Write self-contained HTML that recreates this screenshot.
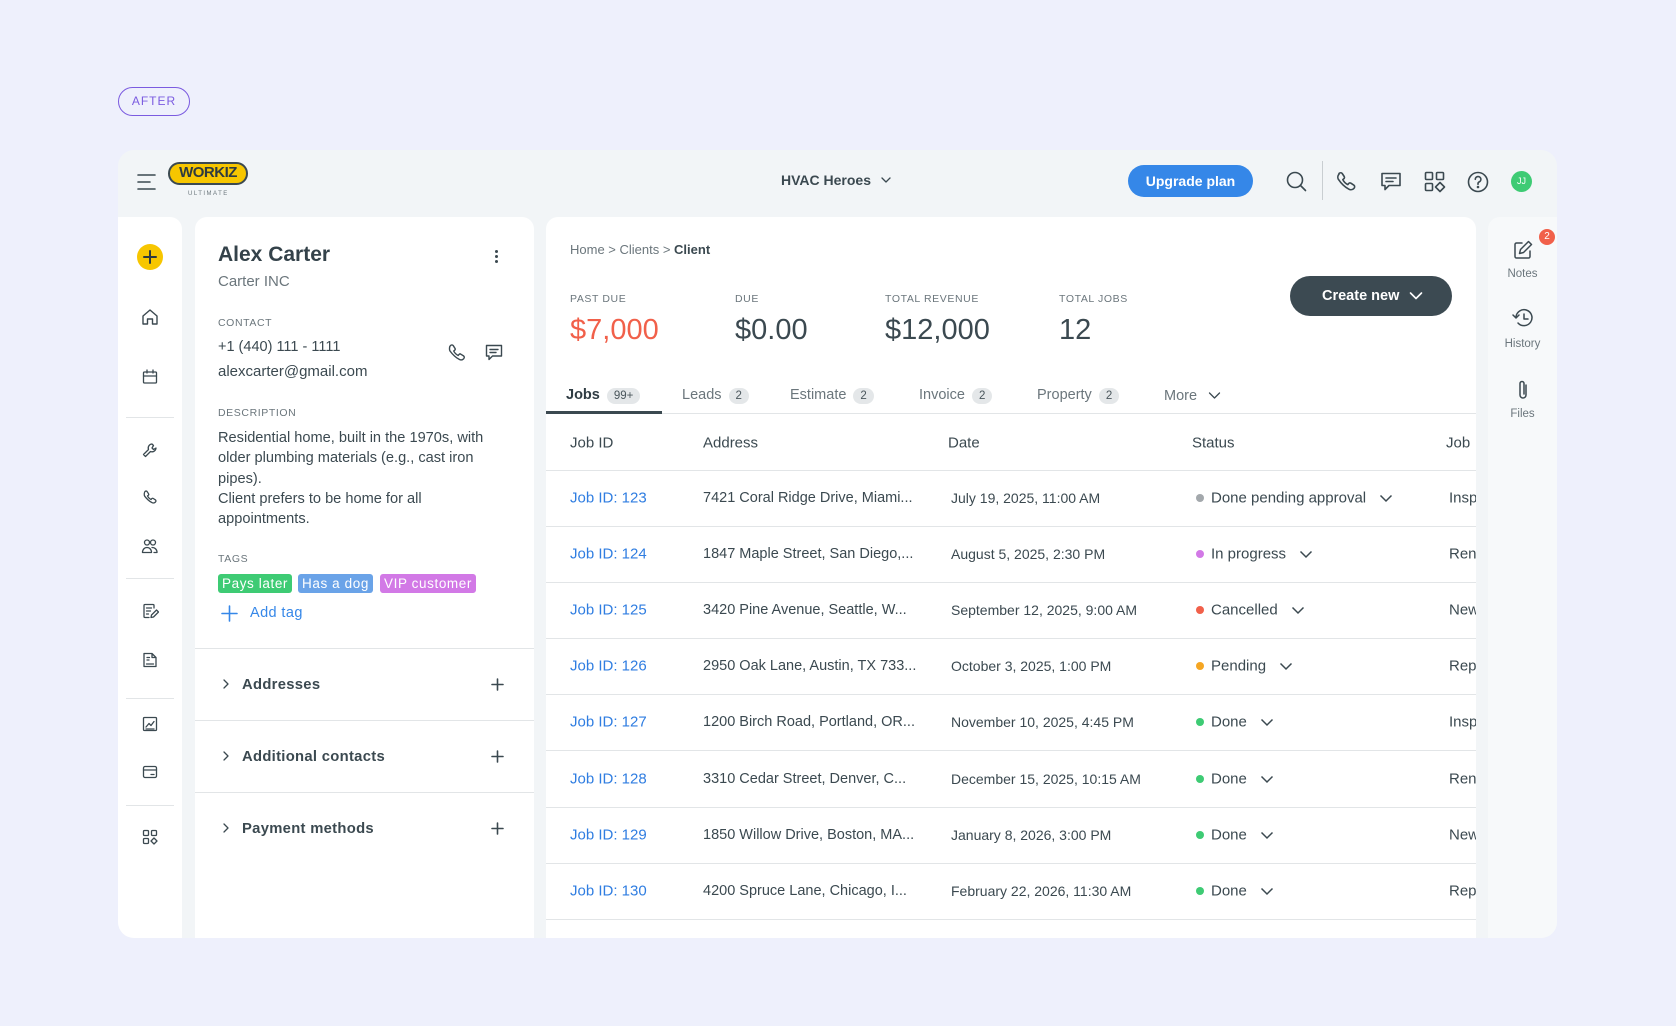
<!DOCTYPE html>
<html><head><meta charset="utf-8"><style>
*{box-sizing:border-box;margin:0;padding:0}
body{width:1676px;height:1026px;background:#eef0fc;font-family:"Liberation Sans",sans-serif;color:#3b4950;position:relative;overflow:hidden}
.a{position:absolute}
.ic{position:absolute;fill:none;stroke:#3b4950;stroke-width:1.6;stroke-linecap:round;stroke-linejoin:round}
.lbl{font-size:10.5px;letter-spacing:.6px;color:#6b767c}
.hr{position:absolute;height:1px;background:#e2e5e7}
.cell{position:absolute;font-size:15px;white-space:nowrap;transform:translateY(-50%)}
.tab{position:absolute;top:387px;font-size:14.5px;color:#6b767c}
.bd{display:inline-block;background:#e4e7e9;border-radius:10px;font-size:11.5px;padding:2px 7px;margin-left:7px;color:#4a565c}
.tag{position:absolute;top:574px;height:19px;color:#fff;font-size:13.5px;line-height:19px;padding:0 4px;border-radius:3px;letter-spacing:.6px}
</style></head><body>
<div class="a" style="left:118px;top:87px;width:72px;height:29px;border:1.3px solid #7b5be0;border-radius:15px;color:#7b5be0;font-size:12px;letter-spacing:1px;text-align:center;line-height:27px">AFTER</div>

<div class="a" style="left:118px;top:150px;width:1439px;height:788px;background:#f2f5f7;border-radius:16px"></div>

<!-- topbar -->
<svg class="ic" style="left:136px;top:172px" width="22" height="20"><path d="M2 3h17M2 10h12M2 17h17"/></svg>
<div class="a" style="left:168px;top:162px;width:80px;height:23px;background:#f7c600;border:2.5px solid #3b4950;border-radius:12px;font-weight:bold;font-size:15px;text-align:center;line-height:18px;color:#2d3a40;letter-spacing:-.5px">WORKIZ</div>
<div class="a" style="left:188px;top:191px;font-size:6px;letter-spacing:1.5px;color:#6b767c">ULTIMATE</div>
<div class="a" style="left:781px;top:172px;font-size:14px;font-weight:bold;color:#3b4950">HVAC Heroes</div>
<svg class="ic" style="left:880px;top:175px" width="12" height="10" ><path d="M2 3l4 4 4-4" stroke-width="1.3"/></svg>
<div class="a" style="left:1128px;top:165px;width:125px;height:32px;background:#3587e8;border-radius:16px;color:#fff;font-weight:bold;font-size:14px;text-align:center;line-height:32px">Upgrade plan</div>
<svg class="ic" style="left:1285px;top:170px" width="24" height="24"><circle cx="10" cy="10" r="7.5"/><path d="M15.5 15.5l5 5"/></svg>
<div class="a" style="left:1322px;top:161px;width:1px;height:39px;background:#c9ced1"></div>
<svg class="ic" style="left:1335px;top:170px" width="24" height="24"><path d="M4 3.5c1-1 2.5-1 3.2 0l2 3c.5.8.3 1.8-.4 2.3l-1 .8c1 2.2 2.8 4 5 5l.8-1c.5-.7 1.5-.9 2.3-.4l3 2c1 .7 1 2.2 0 3.2-1.3 1.3-3.4 1.7-5 .8C9.700 17 6 13.3 3.300 9.200c-.9-1.600-.5-3.700.7-5z"/></svg>
<svg class="ic" style="left:1379px;top:170px" width="24" height="24"><path d="M3 3.5h18v12H10l-4 4v-4H3z"/><path d="M7 8h10M7 11.5h7"/></svg>
<svg class="ic" style="left:1423px;top:170px" width="24" height="24"><rect x="2.5" y="2.5" width="7" height="7" rx="1"/><rect x="13.5" y="2.5" width="7" height="7" rx="1"/><rect x="2.5" y="13.5" width="7" height="7" rx="1"/><path d="M17 12.5l4.5 4.5-4.5 4.5-4.5-4.5z"/></svg>
<svg class="ic" style="left:1466px;top:170px" width="24" height="24"><circle cx="12" cy="12" r="9.5"/><path d="M9.3 9.300a2.800 2.800 0 1 1 3.900 2.600c-.8.400-1.200 1-1.200 1.800v.6"/><circle cx="12" cy="17" r=".5" fill="#3b4950"/></svg>
<div class="a" style="left:1511px;top:171px;width:21px;height:21px;border-radius:50%;background:#3ecb74;color:#fff;font-size:9px;text-align:center;line-height:21px">JJ</div>

<!-- left nav -->
<div class="a" style="left:118px;top:217px;width:64px;height:721px;background:#fff;border-radius:0 12px 0 16px"></div>
<div class="a" style="left:137px;top:244px;width:26px;height:26px;border-radius:50%;background:#f7c600"></div>
<svg class="ic" style="left:137px;top:244px;stroke:#2d3a40;stroke-width:2" width="26" height="26"><path d="M13 7v12M7 13h12"/></svg>
<svg class="ic" style="left:141px;top:308px;stroke-width:1.4" width="18" height="18"><path d="M2 8l7-6 7 6v8h-4.500v-5h-5v5H2z"/></svg>
<svg class="ic" style="left:142px;top:369px;stroke-width:1.3" width="16" height="16"><rect x="1.5" y="3" width="13" height="11" rx="1"/><path d="M1.5 7h13M5 1v3M11 1v3"/></svg>
<div class="hr" style="left:126px;top:417px;width:48px"></div>
<svg class="ic" style="left:142px;top:442px;stroke-width:1.3" width="16" height="16"><path d="M10 2a4 4 0 0 0-3.500 5.500L1.500 12.500l2 2 5-5A4 4 0 0 0 14 6l-2.500 1.500-1.500-1.500 1.500-2.500z"/></svg>
<svg class="ic" style="left:142px;top:490px;stroke-width:1.3" width="16" height="16"><path d="M3 1.500c.8-.7 1.700-.5 2.200.2l1.300 2c.4.6.2 1.300-.3 1.700l-.7.5c.7 1.500 2 2.900 3.600 3.600l.5-.7c.4-.5 1.100-.7 1.700-.3l2 1.300c.7.5.9 1.400.2 2.200-1 1-2.500 1.200-3.700.5C6.800 11 4.900 9.100 2.700 6.200 2 5 2.100 2.500 3 1.500z"/></svg>
<svg class="ic" style="left:141px;top:538px;stroke-width:1.3" width="18" height="16"><circle cx="6" cy="4.500" r="2.500"/><circle cx="12" cy="4.500" r="2.500"/><path d="M1.500 14.500c0-3 2-5 4.500-5s4.500 2 4.500 5zM11 9.500c3 0 5 2 5 5h-3"/></svg>
<div class="hr" style="left:126px;top:578px;width:48px"></div>
<svg class="ic" style="left:142px;top:603px;stroke-width:1.3" width="17" height="16"><path d="M12 5V2.500c0-.6-.4-1-1-1H3c-.6 0-1 .4-1 1v11c0 .6.4 1 1 1h4M4.500 5h5M4.500 8h4M4.500 11h2M9 14.500l.5-2.500 5-5 2 2-5 5z"/></svg>
<svg class="ic" style="left:142px;top:652px;stroke-width:1.3" width="16" height="16"><path d="M2 1.500h8l4 4v9H2zM10 1.500v4h4M4.500 12h7M5 5.500h2.500M5 8h2"/></svg>
<div class="hr" style="left:126px;top:698px;width:48px"></div>
<svg class="ic" style="left:142px;top:716px;stroke-width:1.3" width="16" height="16"><rect x="1.500" y="1.500" width="13" height="13" rx="1"/><path d="M4 11l3-3.500 2 2 3-4M4 13h8"/></svg>
<svg class="ic" style="left:142px;top:765px;stroke-width:1.3" width="16" height="14"><rect x="1.500" y="1.500" width="13" height="11" rx="1.500"/><path d="M1.500 5h13M9 9.500h3"/></svg>
<div class="hr" style="left:126px;top:805px;width:48px"></div>
<svg class="ic" style="left:142px;top:829px;stroke-width:1.3" width="16" height="16"><rect x="1.500" y="1.500" width="5" height="5" rx="1"/><rect x="9.500" y="1.500" width="5" height="5" rx="1"/><rect x="1.500" y="9.500" width="5" height="5" rx="1"/><path d="M12 9l3 3-3 3-3-3z"/></svg>

<!-- client panel -->
<div class="a" style="left:195px;top:217px;width:339px;height:721px;background:#fff;border-radius:12px 12px 0 0"></div>
<div class="a" style="left:218px;top:243px;font-size:21px;font-weight:bold;color:#34424a">Alex Carter</div>
<div class="a" style="left:495px;top:250px;width:3px;height:3px;border-radius:50%;background:#3b4950;box-shadow:0 5px 0 #3b4950,0 10px 0 #3b4950"></div>
<div class="a" style="left:218px;top:273px;font-size:15px;color:#6b767c">Carter INC</div>
<div class="a lbl" style="left:218px;top:317px">CONTACT</div>
<div class="a" style="left:218px;top:339px;font-size:14.5px">+1 (440) 111 - 1111</div>
<div class="a" style="left:218px;top:363px;font-size:15px">alexcarter@gmail.com</div>
<svg class="ic" style="left:447px;top:343px;stroke-width:1.4" width="20" height="20"><path d="M3.500 2.500c1-.9 2.200-.7 2.800.2l1.600 2.500c.5.700.3 1.600-.3 2.100l-.9.700c.9 1.900 2.500 3.500 4.500 4.500l.7-.9c.5-.7 1.400-.8 2.100-.3l2.500 1.600c.9.600 1.100 1.800.2 2.800-1.200 1.200-3 1.500-4.400.7C8.600 14.500 5.500 11.400 3 8 2.200 6.600 2.300 3.700 3.500 2.500z"/></svg>
<svg class="ic" style="left:484px;top:343px;stroke-width:1.4" width="20" height="20"><path d="M2.500 2.500h15v10.500H8.500l-3.500 3.500V13H2.500z"/><path d="M6 6.500h8M6 9.500h6"/></svg>
<div class="a lbl" style="left:218px;top:407px">DESCRIPTION</div>
<div class="a" style="left:218px;top:428px;width:285px;font-size:14.6px;line-height:20.3px">Residential home, built in the 1970s, with older plumbing materials (e.g., cast iron pipes).<br>Client prefers to be home for all appointments.</div>
<div class="a lbl" style="left:218px;top:553px">TAGS</div>
<div class="tag" style="left:218px;background:#3ecb74">Pays later</div>
<div class="tag" style="left:298px;background:#6aa3e8">Has a dog</div>
<div class="tag" style="left:380px;background:#d279e6">VIP customer</div>
<svg class="ic" style="left:221px;top:605px;stroke:#3587e8;stroke-width:1.6" width="17" height="17"><path d="M8.500 1v15M1 8.500h15"/></svg>
<div class="a" style="left:250px;top:605px;font-size:14.5px;color:#3587e8;letter-spacing:.4px">Add tag</div>
<div class="hr" style="left:195px;top:648px;width:339px"></div>
<div class="hr" style="left:195px;top:720px;width:339px"></div>
<div class="hr" style="left:195px;top:792px;width:339px"></div>
<svg class="ic" style="left:221px;top:678px;stroke-width:1.3" width="10" height="12"><path d="M3 2l4 4-4 4"/></svg>
<svg class="ic" style="left:221px;top:750px;stroke-width:1.3" width="10" height="12"><path d="M3 2l4 4-4 4"/></svg>
<svg class="ic" style="left:221px;top:822px;stroke-width:1.3" width="10" height="12"><path d="M3 2l4 4-4 4"/></svg>
<div class="a" style="left:242px;top:677px;font-size:14.8px;font-weight:bold;letter-spacing:.3px">Addresses</div>
<div class="a" style="left:242px;top:749px;font-size:14.8px;font-weight:bold;letter-spacing:.3px">Additional contacts</div>
<div class="a" style="left:242px;top:821px;font-size:14.8px;font-weight:bold;letter-spacing:.3px">Payment methods</div>
<svg class="ic" style="left:491px;top:678px" width="13" height="13"><path d="M6.500 1v11M1 6.500h11"/></svg>
<svg class="ic" style="left:491px;top:750px" width="13" height="13"><path d="M6.500 1v11M1 6.500h11"/></svg>
<svg class="ic" style="left:491px;top:822px" width="13" height="13"><path d="M6.500 1v11M1 6.500h11"/></svg>

<!-- main panel -->
<div class="a" style="left:546px;top:217px;width:930px;height:721px;background:#fff;border-radius:12px 12px 0 0;overflow:hidden"></div>
<div class="a" style="left:570px;top:242px;font-size:13px;color:#6b767c">Home &gt; Clients &gt; <span style="color:#3b4950;font-weight:bold">Client</span></div>
<div class="a lbl" style="left:570px;top:293px">PAST DUE</div>
<div class="a lbl" style="left:735px;top:293px">DUE</div>
<div class="a lbl" style="left:885px;top:293px">TOTAL REVENUE</div>
<div class="a lbl" style="left:1059px;top:293px">TOTAL JOBS</div>
<div class="a" style="left:570px;top:314px;font-size:29px;color:#f1604a">$7,000</div>
<div class="a" style="left:735px;top:314px;font-size:29px">$0.00</div>
<div class="a" style="left:885px;top:314px;font-size:29px">$12,000</div>
<div class="a" style="left:1059px;top:314px;font-size:29px">12</div>
<div class="a" style="left:1290px;top:276px;width:162px;height:40px;background:#3c4a52;border-radius:20px;color:#fff;font-weight:bold;font-size:14.5px;line-height:40px;padding-left:32px">Create new</div>
<svg class="ic" style="left:1409px;top:291px;stroke:#fff;stroke-width:1.6" width="14" height="10"><path d="M1.500 2l5.500 5.500 5.500-5.500"/></svg>

<div class="tab" style="left:566px;color:#2f3c43;font-weight:bold">Jobs<span class="bd" style="font-weight:normal">99+</span></div>
<div class="tab" style="left:682px">Leads<span class="bd">2</span></div>
<div class="tab" style="left:790px">Estimate<span class="bd">2</span></div>
<div class="tab" style="left:919px">Invoice<span class="bd">2</span></div>
<div class="tab" style="left:1037px">Property<span class="bd">2</span></div>
<div class="tab" style="left:1164px;top:388px">More</div>
<svg class="ic" style="left:1208px;top:391px;stroke-width:1.3" width="13" height="9"><path d="M1.500 2l5 5 5-5"/></svg>
<div class="hr" style="left:546px;top:413px;width:930px"></div>
<div class="a" style="left:546px;top:411px;width:116px;height:3px;background:#3b4950"></div>

<div class="cell" style="left:570px;top:443px">Job ID</div>
<div class="cell" style="left:703px;top:443px">Address</div>
<div class="cell" style="left:948px;top:443px">Date</div>
<div class="cell" style="left:1192px;top:443px">Status</div>
<div class="cell" style="left:1446px;top:443px">Job</div>
<div class="hr" style="left:546px;top:470px;width:930px"></div>

<div id="rows"></div>
<div class="a" style="left:1476px;top:217px;width:12px;height:721px;background:#f2f5f7"></div>

<!-- right panel -->
<div class="a" style="left:1488px;top:217px;width:69px;height:721px;background:#f7f9fa;border-radius:12px 0 16px 0"></div>
<svg class="ic" style="left:1512px;top:239px;stroke-width:1.5" width="22" height="22"><path d="M10 4H4.500c-.8 0-1.500.7-1.500 1.500v12c0 .8.7 1.500 1.500 1.500h12c.8 0 1.500-.7 1.500-1.500V12"/><path d="M16.500 2.500l3 3-8 8-4 1 1-4z"/></svg>
<div class="a" style="left:1539px;top:229px;width:16px;height:16px;border-radius:50%;background:#f1604a;color:#fff;font-size:10px;text-align:center;line-height:16px">2</div>
<div class="a" style="left:1488px;top:268px;width:69px;text-align:center;font-size:11.5px;color:#6b767c">Notes</div>
<svg class="ic" style="left:1511px;top:308px;stroke-width:1.5" width="24" height="22"><path d="M5 9a8 8 0 1 1 2 6"/><path d="M2 7l3 3 3-3M13 6v5h4"/></svg>
<div class="a" style="left:1488px;top:338px;width:69px;text-align:center;font-size:11.5px;color:#6b767c">History</div>
<svg class="ic" style="left:1515px;top:379px;stroke-width:1.5" width="16" height="22"><path d="M11 6v10a3 3 0 0 1-6 0V4.500a2 2 0 0 1 4 0V15"/></svg>
<div class="a" style="left:1488px;top:408px;width:69px;text-align:center;font-size:11.5px;color:#6b767c">Files</div>

<script>
var d=[["123","7421 Coral Ridge Drive, Miami...","July 19, 2025, 11:00 AM","#a3a8ac","Done pending approval","Insp"],
["124","1847 Maple Street, San Diego,...","August 5, 2025, 2:30 PM","#d279e6","In progress","Ren"],
["125","3420 Pine Avenue, Seattle, W...","September 12, 2025, 9:00 AM","#f1604a","Cancelled","New"],
["126","2950 Oak Lane, Austin, TX 733...","October 3, 2025, 1:00 PM","#f5a623","Pending","Rep"],
["127","1200 Birch Road, Portland, OR...","November 10, 2025, 4:45 PM","#3ecb74","Done","Insp"],
["128","3310 Cedar Street, Denver, C...","December 15, 2025, 10:15 AM","#3ecb74","Done","Ren"],
["129","1850 Willow Drive, Boston, MA...","January 8, 2026, 3:00 PM","#3ecb74","Done","New"],
["130","4200 Spruce Lane, Chicago, I...","February 22, 2026, 11:30 AM","#3ecb74","Done","Rep"]];
var h="";
d.forEach(function(r,i){var y=498+i*56.1;var l=526+i*56.1;
h+='<div class="cell" style="left:570px;top:'+y+'px;color:#2f7de1">Job ID: '+r[0]+'</div>';
h+='<div class="cell" style="left:703px;top:'+y+'px;font-size:14.5px">'+r[1]+'</div>';
h+='<div class="cell" style="left:951px;top:'+y+'px;font-size:14px">'+r[2]+'</div>';
h+='<div class="a" style="left:1196px;top:'+(y-4)+'px;width:8px;height:8px;border-radius:50%;background:'+r[3]+'"></div>';
h+='<div class="cell" style="left:1211px;top:'+y+'px">'+r[4]+'<svg width="14" height="10" style="margin-left:13px;vertical-align:middle;fill:none;stroke:#3b4950;stroke-width:1.5"><path d="M1.5 2l5.5 5.5 5.5-5.5"/></svg></div>';
h+='<div class="cell" style="left:1449px;top:'+y+'px">'+r[5]+'</div>';
h+='<div class="hr" style="left:546px;top:'+l+'px;width:930px"></div>';});
document.getElementById("rows").outerHTML=h;
</script>
</body></html>
